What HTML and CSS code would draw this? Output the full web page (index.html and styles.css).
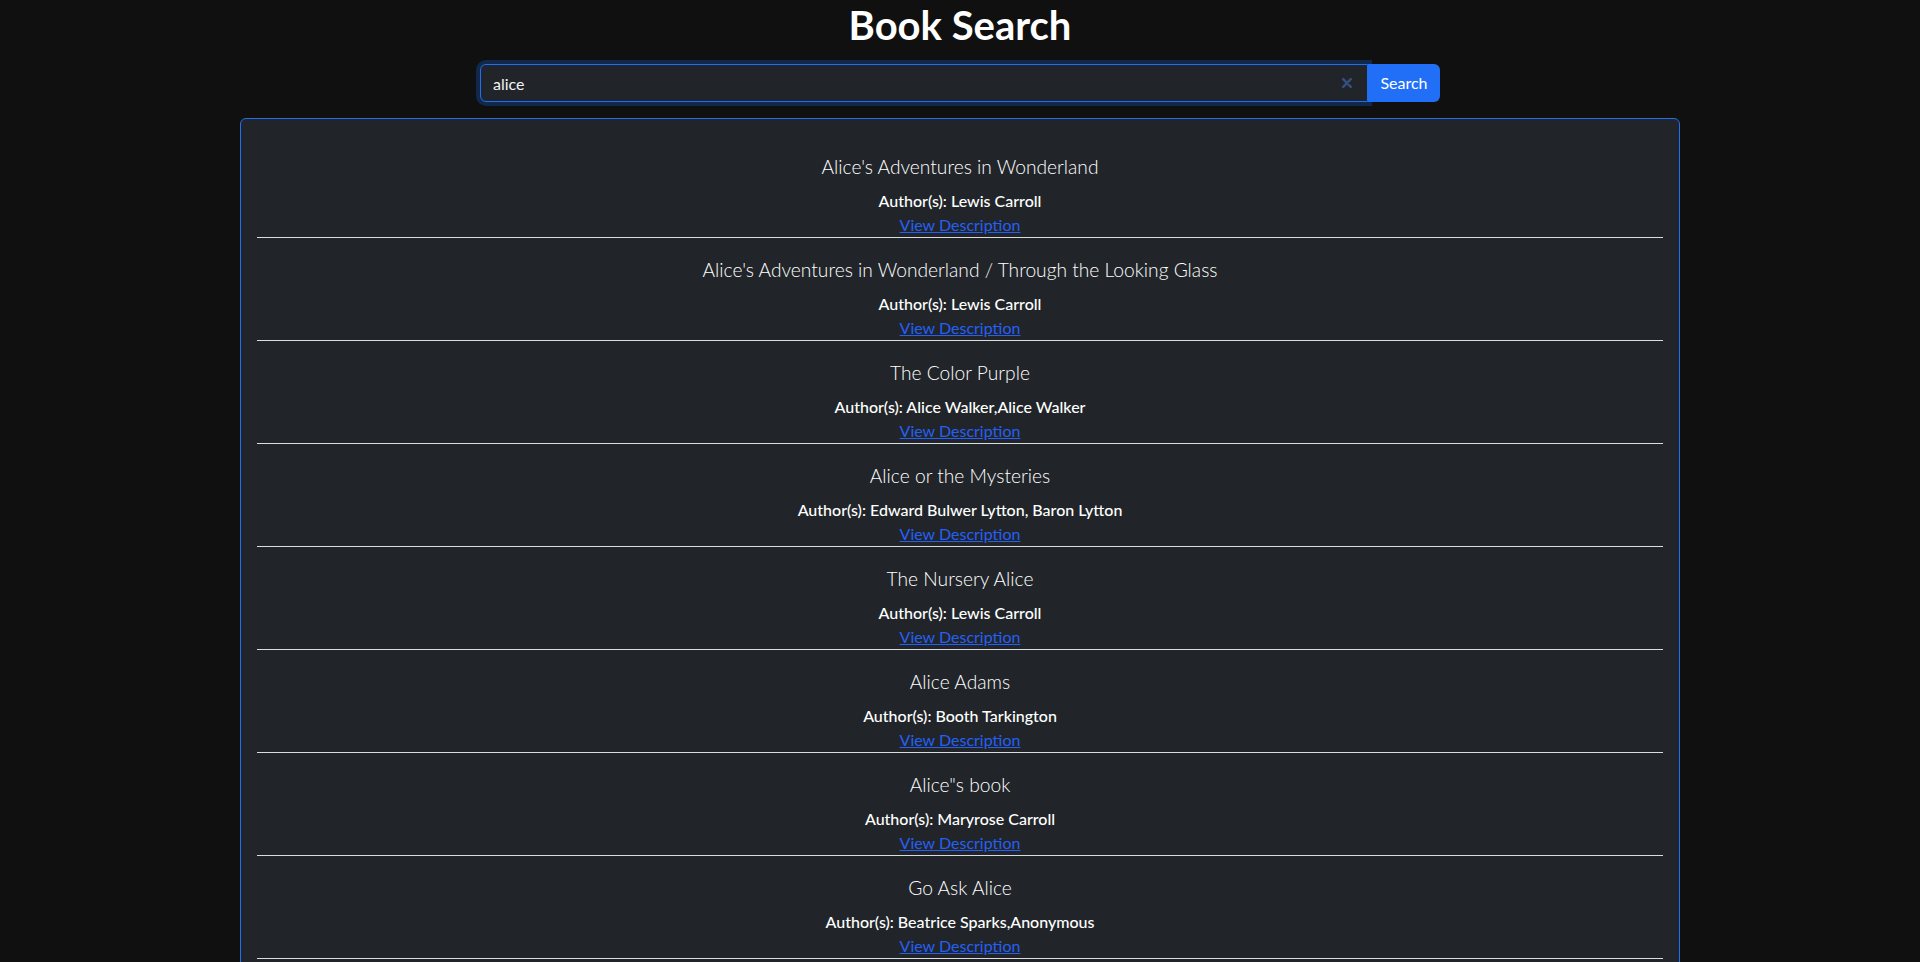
FILE: index.html
```html
<!DOCTYPE html>
<html lang="en">
<head>
<meta charset="utf-8">
<title>Book Search</title>
<link rel="stylesheet" href="styles.css">
</head>
<body>
<h1 class="page-title">Book Search</h1>
<form class="search-group">
  <div class="search-field">
    <input class="search-input" type="text" value="alice">
    <span class="clear-btn"><svg width="10" height="10" viewBox="0 0 10 10"><path d="M1.2 1.2 L8.8 8.8 M8.8 1.2 L1.2 8.8" stroke="#34507e" stroke-width="2.4" stroke-linecap="round"/></svg></span>
  </div>
  <button class="search-btn" type="button">Search</button>
</form>
<main class="results">
  <div class="book">
    <h5 class="book-title">Alice's Adventures in Wonderland</h5>
    <p class="book-author">Author(s): Lewis Carroll</p>
    <a class="book-link" href="#">View Description</a>
  </div>
  <div class="book">
    <h5 class="book-title">Alice's Adventures in Wonderland / Through the Looking Glass</h5>
    <p class="book-author">Author(s): Lewis Carroll</p>
    <a class="book-link" href="#">View Description</a>
  </div>
  <div class="book">
    <h5 class="book-title">The Color Purple</h5>
    <p class="book-author">Author(s): Alice Walker,Alice Walker</p>
    <a class="book-link" href="#">View Description</a>
  </div>
  <div class="book">
    <h5 class="book-title">Alice or the Mysteries</h5>
    <p class="book-author">Author(s): Edward Bulwer Lytton, Baron Lytton</p>
    <a class="book-link" href="#">View Description</a>
  </div>
  <div class="book">
    <h5 class="book-title">The Nursery Alice</h5>
    <p class="book-author">Author(s): Lewis Carroll</p>
    <a class="book-link" href="#">View Description</a>
  </div>
  <div class="book">
    <h5 class="book-title">Alice Adams</h5>
    <p class="book-author">Author(s): Booth Tarkington</p>
    <a class="book-link" href="#">View Description</a>
  </div>
  <div class="book">
    <h5 class="book-title">Alice"s book</h5>
    <p class="book-author">Author(s): Maryrose Carroll</p>
    <a class="book-link" href="#">View Description</a>
  </div>
  <div class="book">
    <h5 class="book-title">Go Ask Alice</h5>
    <p class="book-author">Author(s): Beatrice Sparks,Anonymous</p>
    <a class="book-link" href="#">View Description</a>
  </div>
</main>
</body>
</html>
```

FILE: styles.css
```css
* { box-sizing: border-box; }

body {
  margin: 0;
  background: #101010;
  color: #dee2e6;
  font-family: Lato, "Open Sans", "DejaVu Sans", sans-serif;
  font-size: 16px;
  line-height: 24px;
}

.page-title {
  margin: 0 0 16px;
  padding-top: 2px;
  height: 48px;
  text-align: center;
  font-size: 40px;
  line-height: 46px;
  font-weight: 700;
  color: #ffffff;
}

.search-group {
  display: flex;
  width: 960px;
  height: 38px;
  margin: 0 auto 16px;
}

.search-field {
  position: relative;
  flex: 1;
  display: flex;
}

.search-input {
  flex: 1;
  height: 38px;
  padding: 6px 36px 6px 12px;
  border: 1px solid #1f6ef5;
  border-radius: 6px 0 0 6px;
  background: #212529;
  color: #f1f3f5;
  font: inherit;
  outline: none;
  box-shadow: 0 0 0 4px rgba(13, 110, 253, 0.25);
}

.clear-btn {
  position: absolute;
  right: 16px;
  top: 14px;
  width: 10px;
  height: 10px;
  display: flex;
}

.search-btn {
  position: relative;
  width: 72px;
  height: 38px;
  border: 0;
  border-radius: 0 6px 6px 0;
  background: #216ff7;
  color: #ffffff;
  font: inherit;
  padding: 0;
}

.results {
  width: 1440px;
  margin: 0 auto;
  padding: 16px;
  background: #212529;
  border: 1px solid #1f6ef5;
  border-radius: 6px;
}

.book {
  padding-top: 20px;
  border-bottom: 1px solid #dcdcdc;
  text-align: center;
}

.book-title {
  margin: 0 0 10px;
  font-size: 19.2px;
  line-height: 24px;
  font-weight: 300;
  color: #ffffff;
}

.book-author {
  margin: 0;
  font-weight: 500;
  color: #ffffff;
}

.book-link {
  display: inline-block;
  color: #2560f5;
  text-decoration: underline;
}
```
